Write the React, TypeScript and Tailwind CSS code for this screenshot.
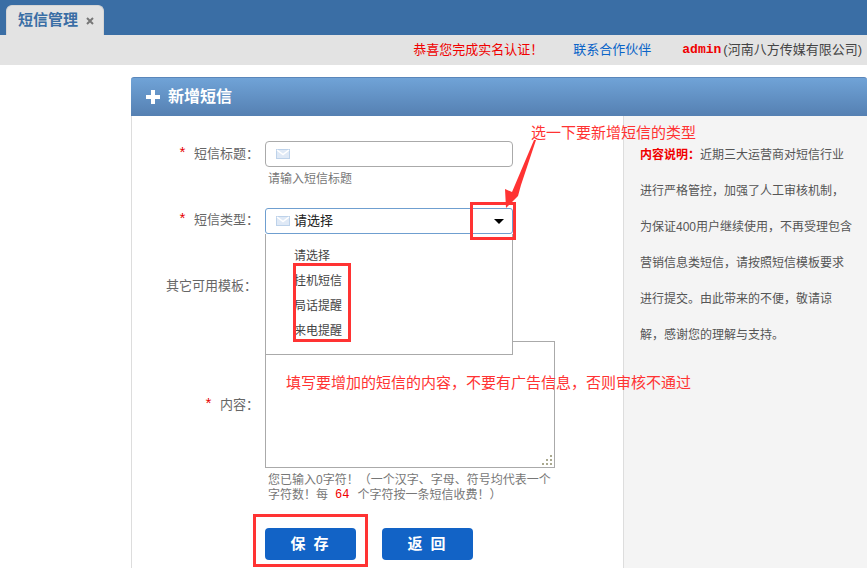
const CJK = "font-['Liberation_Sans','Noto_Sans_CJK_SC',sans-serif]"

function MailIcon() {
  return (
    <svg width="14" height="10" viewBox="0 0 14 10" className="shrink-0">
      <rect x="0.5" y="0.5" width="13" height="9" fill="#dfe9f6" stroke="#bdd2ea" />
      <path d="M1 1l6 4.5L13 1" fill="none" stroke="#fff" strokeWidth="1.5" />
    </svg>
  )
}

function Label({ children }: { children: React.ReactNode }) {
  return (
    <div className="w-[133px] shrink-0 pr-[6px] text-right text-[13px] leading-[20px] text-[#666]">
      <span className="mr-[7px] font-['Liberation_Mono',monospace] text-[15px] text-[#e60000]">*</span>
      {children}
    </div>
  )
}

const options = ["请选择", "挂机短信", "局话提醒", "来电提醒"]

const notes = [
  "进行严格管控，加强了人工审核机制，",
  "为保证400用户继续使用，不再受理包含",
  "营销信息类短信，请按照短信模板要求",
  "进行提交。由此带来的不便，敬请谅",
  "解，感谢您的理解与支持。",
]

export default function App() {
  return (
    <div className={`relative h-[568px] w-[867px] overflow-hidden bg-white ${CJK}`}>
      {/* Tab bar */}
      <div className="flex h-[35px] items-end bg-[#3a6ea5] pl-[6px]">
        <div className="flex h-[30px] w-[98px] items-center rounded-t-[6px] border border-b-0 border-[#d5d5d5] bg-[#e3e3e3] pl-[11px]">
          <span className="text-[15px] font-bold text-[#3a6ea5]">短信管理</span>
          <svg width="8" height="8" viewBox="0 0 8 8" className="ml-[8px]">
            <path d="M1 1l6 6M7 1L1 7" stroke="#777" strokeWidth="2" />
          </svg>
        </div>
      </div>

      {/* Info bar */}
      <div className="flex h-[30px] items-center justify-end bg-[#e3e3e3] pr-[3px] text-[13px]">
        <span className="text-[#f00000]">恭喜您完成实名认证！</span>
        <span className="ml-[30px] text-[#0a64c8]">联系合作伙伴</span>
        <span className="ml-[31px] font-['Liberation_Mono',monospace] font-bold text-[#f00000]">admin</span>
        <span className="px-[2px] text-[#444]">(河南八方传媒有限公司)</span>
      </div>

      {/* Panel */}
      <div className="ml-[131px] mt-[12px] flex h-[491px] flex-col">
        <div className="flex h-[39px] items-center rounded-t-[3px] border-t border-[#5a86ba] bg-gradient-to-b from-[#70a3d7] to-[#5580b2] pl-[15px]">
          <svg width="14" height="14" viewBox="0 0 14 14">
            <path d="M5 0h4v5h5v4H9v5H5V9H0V5h5z" fill="#fff" />
          </svg>
          <span className="ml-[8px] text-[16px] font-bold text-white">新增短信</span>
        </div>

        <div className="flex flex-1 border-l border-[#ddd]">
          {/* Form */}
          <div className="w-[491px] shrink-0 pt-[25px]">
            <div className="flex">
              <div className="pt-[3px]">
                <Label>短信标题：</Label>
              </div>
              <div>
                <div className="flex h-[26px] w-[248px] items-center rounded-[4px] border border-[#aaa] pl-[10px]">
                  <MailIcon />
                </div>
                <p className="mt-[4px] pl-[3px] text-[12px] leading-[16px] text-[#777]">请输入短信标题</p>
              </div>
            </div>

            <div className="relative mt-[21px] flex">
              <div className="pt-[2px]">
                <Label>短信类型：</Label>
              </div>
              <div className="flex h-[26px] w-[248px] items-center rounded-[3px] border border-[#6f9fd0] pl-[10px]">
                <MailIcon />
                <span className="ml-[4px] text-[13px] text-[#222]">请选择</span>
                <span className="ml-auto mr-[8px] h-0 w-0 border-x-[5px] border-t-[5px] border-x-transparent border-t-black" />
              </div>
              {/* Open dropdown */}
              <div className="absolute left-[133px] top-[26px] z-10 h-[121px] w-[248px] border border-t-0 border-[#aaa] bg-white pl-[28px] pt-[10px] text-[12px] leading-[25px] text-[#444]">
                {options.map((o) => (
                  <div key={o}>{o}</div>
                ))}
              </div>
            </div>

            <div className="mt-[42px] w-[133px] pr-[8px] text-right text-[13px] leading-[20px] text-[#666]">其它可用模板：</div>

            <div className="mt-[45px] flex">
              <div className="flex h-[127px] w-[133px] shrink-0 items-end pb-[52px]">
                <Label>内容：</Label>
              </div>
              <div className="relative h-[127px] w-[290px] border border-[#aaa] bg-white">
                <svg width="11" height="11" viewBox="0 0 11 11" className="absolute bottom-[1px] right-[1px]">
                  <path d="M8 0h2v2H8zM4 4h2v2H4zM8 4h2v2H8zM0 8h2v2H0zM4 8h2v2H4zM8 8h2v2H8z" fill="#aaa98f" />
                </svg>
              </div>
            </div>

            <div className="ml-[136px] mt-[5px] text-[12px] leading-[15px] text-[#777]">
              <div className="whitespace-nowrap">您已输入0字符！（一个汉字、字母、符号均代表一个</div>
              <div className="flex whitespace-nowrap">
                <span>字符数！每</span>
                <span className="ml-[7px] font-['Liberation_Mono',monospace] text-[#f00000]">64</span>
                <span className="ml-[8px]">个字符按一条短信收费！）</span>
              </div>
            </div>

            <div className="ml-[133px] mt-[25px] flex gap-[26px]">
              <button className="h-[32px] w-[91px] rounded-[4px] bg-[#1263c6] text-[15px] font-bold tracking-[2px] text-white">保 存</button>
              <button className="h-[32px] w-[91px] rounded-[4px] bg-[#1263c6] text-[15px] font-bold tracking-[2px] text-white">返 回</button>
            </div>
          </div>

          {/* Side note */}
          <div className="flex-1 border-l border-[#ddd] bg-[#f4f4f4] pl-[16px] pt-[21px] text-[12px] leading-[36px] text-[#555]">
            <div className="whitespace-nowrap">
              <span className="font-bold text-[#f00000]">内容说明：</span>近期三大运营商对短信行业
            </div>
            {notes.map((n) => (
              <div key={n} className="whitespace-nowrap">{n}</div>
            ))}
          </div>
        </div>
      </div>

      {/* Tutorial annotations drawn over the screenshot */}
      <div className="absolute left-[531px] top-[123px] text-[15px] leading-[20px] text-[#ff3333]">选一下要新增短信的类型</div>
      <div className="absolute left-[286px] top-[373px] z-20 whitespace-nowrap text-[15px] leading-[20px] text-[#ff3333]">填写要增加的短信的内容，不要有广告信息，否则审核不通过</div>
      <svg width="40" height="72" viewBox="0 0 40 72" className="absolute left-[500px] top-[138px] z-20">
        <path d="M36 2L21 47l-3 11L6 70 5 51l7 3L34 2z" fill="#ff3333" />
      </svg>
      <div className="absolute left-[470px] top-[202px] z-20 h-[38px] w-[46px] border-[3px] border-[#ff3333]" />
      <div className="absolute left-[293px] top-[263px] z-20 h-[79px] w-[58px] border-[3px] border-[#ff3333]" />
      <div className="absolute left-[253px] top-[514px] h-[53px] w-[115px] border-[3px] border-[#ff3333]" />
    </div>
  )
}
